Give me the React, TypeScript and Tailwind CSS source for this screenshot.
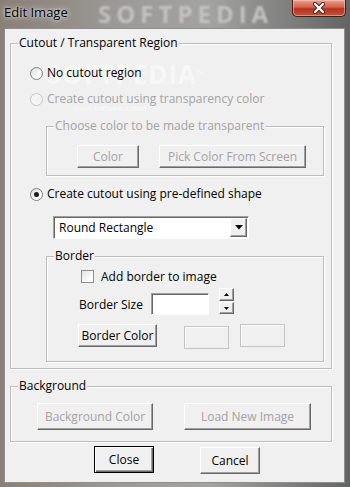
import type { ReactNode } from "react";

const raised =
  "bg-[#f0f0f0] border border-t-white border-l-white border-r-[#696969] border-b-[#696969] shadow-[inset_-1px_-1px_0_#a0a0a0]";
const sunken =
  "border border-t-[#a0a0a0] border-l-[#a0a0a0] border-r-white border-b-white shadow-[inset_1px_1px_0_#696969]";

function Group({
  label,
  disabled,
  className,
  children,
}: {
  label: string;
  disabled?: boolean;
  className: string;
  children?: ReactNode;
}) {
  return (
    <div
      className={`relative border border-[#bcbcbc] shadow-[inset_1px_1px_0_#fff,1px_1px_0_#fff] ${className}`}
    >
      <span
        className={`absolute -top-[9px] left-[7px] px-[1px] bg-[#f0f0f0] whitespace-nowrap ${
          disabled ? "text-[#a3a3a3]" : "text-black"
        }`}
      >
        {label}
      </span>
      <div className="pt-px">{children}</div>
    </div>
  );
}

function Radio({ checked, disabled }: { checked?: boolean; disabled?: boolean }) {
  return (
    <div
      className={`w-[13px] h-[13px] shrink-0 rounded-full border flex items-center justify-center ${
        disabled
          ? "border-[#c6c6c6] bg-[#f4f4f4]"
          : "border-[#7f8080] bg-[linear-gradient(135deg,#d6d6d6,#ffffff_70%)]"
      }`}
    >
      {checked && <div className="w-[5px] h-[5px] rounded-full bg-[#1b1b1b]" />}
    </div>
  );
}

function Btn({
  children,
  className,
  disabled,
  isDefault,
}: {
  children: ReactNode;
  className: string;
  disabled?: boolean;
  isDefault?: boolean;
}) {
  const frame = isDefault
    ? "bg-[#f0f0f0] border border-black shadow-[inset_1px_1px_0_#fff,inset_-1px_-1px_0_#696969,inset_-2px_-2px_0_#a0a0a0]"
    : raised;
  return (
    <div
      className={`flex items-center justify-center shrink-0 whitespace-nowrap ${frame} ${
        disabled ? "text-[#a3a3a3]" : "text-black"
      } ${className}`}
    >
      {children}
    </div>
  );
}

export default function App() {
  return (
    <div className="w-[350px] h-[487px] relative overflow-hidden bg-[linear-gradient(90deg,#8a7f76_0%,#9c9a98_35%,#a3a3a1_60%,#7a7b7a_85%,#626463_100%)] font-['Open_Sans','Liberation_Sans',Arial,sans-serif] text-[12px] leading-[16px] text-black">
      {/* title bar */}
      <div className="relative h-[28px] flex justify-between items-start">
        <div className="pointer-events-none absolute left-[98px] top-px text-[24px] leading-[26px] font-bold tracking-[5px] text-[#c2c2c0] blur-[1px]">
          SOFTPEDIA
        </div>
        <div className="relative pl-[4px] pt-[4px] text-[13px] [text-shadow:0_0_6px_#e8e8e8,0_0_3px_#e8e8e8]">
          Edit Image
        </div>
        <div className="relative mr-[4px] w-[54px] h-[17px] rounded-b-[5px] border border-t-0 border-[#4d1a12] bg-[linear-gradient(180deg,#e8a292_0%,#d2614a_45%,#b8321c_55%,#c9503a_100%)] shadow-[inset_0_0_0_1px_rgba(255,210,200,0.5)] flex items-center justify-center">
          <svg width="14" height="12" viewBox="0 0 14 12">
            <path d="M3 2 L11 10 M11 2 L3 10" stroke="#3a2a28" strokeWidth="4" strokeLinecap="round" />
            <path d="M3 2 L11 10 M11 2 L3 10" stroke="#ffffff" strokeWidth="2.2" strokeLinecap="round" />
          </svg>
        </div>
      </div>

      {/* client area */}
      <div className="relative ml-[4px] w-[341px] h-[455px] bg-[#f0f0f0] border border-[#8f8f8f]">
        <div className="pointer-events-none absolute left-[42px] top-[30px] text-[26px] leading-[30px] font-bold tracking-[1px] text-white opacity-50">
          SOFTPEDIA<span className="text-[7px] align-top">™</span>
        </div>
        <div className="pointer-events-none absolute left-[68px] top-[74px] text-[8px] leading-[10px] text-white opacity-60">
          www.softpedia.com
        </div>

        <Group label="Cutout / Transparent Region" className="ml-[5px] mt-[14px] w-[322px] h-[326px]">
          <div className="relative ml-[19px] mt-[21px] h-[14px] flex items-center">
            <Radio />
            <span className="ml-[4px]">No cutout region</span>
          </div>
          <div className="relative ml-[19px] mt-[12px] h-[14px] flex items-center text-[#a3a3a3]">
            <Radio disabled />
            <span className="ml-[4px]">Create cutout using transparency color</span>
          </div>

          <Group
            label="Choose color to be made transparent"
            disabled
            className="ml-[35px] mt-[20px] w-[278px] h-[50px]"
          >
            <div className="ml-[30px] mt-[17px] flex gap-[20px]">
              <Btn disabled className="w-[62px] h-[23px]">
                Color
              </Btn>
              <Btn disabled className="w-[147px] h-[23px]">
                Pick Color From Screen
              </Btn>
            </div>
          </Group>

          <div className="ml-[19px] mt-[11px] h-[14px] flex items-center">
            <Radio checked />
            <span className="ml-[4px]">Create cutout using pre-defined shape</span>
          </div>

          <div className={`ml-[42px] mt-[15px] w-[196px] h-[23px] bg-white flex items-center ${sunken}`}>
            <span className="ml-[5px] flex-1">Round Rectangle</span>
            <div className={`w-[17px] h-[19px] mr-px flex items-center justify-center ${raised}`}>
              <svg width="8" height="5" viewBox="0 0 8 5">
                <path d="M0 0 H8 L4 4.5 Z" fill="#000" />
              </svg>
            </div>
          </div>

          <Group label="Border" className="ml-[35px] mt-[17px] w-[278px] h-[106px]">
            <div className="ml-[34px] mt-[12px] h-[13px] flex items-center">
              <div className="w-[13px] h-[13px] border border-[#8e8f8f] bg-[linear-gradient(135deg,#e2e2e2,#ffffff_75%)] shrink-0" />
              <span className="ml-[7px]">Add border to image</span>
            </div>

            <div className="ml-[32px] mt-[5px] flex items-start">
              <span className="w-[72px] mt-[9px]">Border Size</span>
              <div className={`mt-[5px] w-[58px] h-[22px] bg-white ${sunken}`} />
              <div className="ml-[10px] flex flex-col gap-px">
                <div className={`w-[15px] h-[13px] flex items-center justify-center ${raised}`}>
                  <svg width="5" height="3" viewBox="0 0 5 3">
                    <path d="M0 3 H5 L2.5 0 Z" fill="#000" />
                  </svg>
                </div>
                <div className={`w-[15px] h-[12px] flex items-center justify-center ${raised}`}>
                  <svg width="5" height="3" viewBox="0 0 5 3">
                    <path d="M0 0 H5 L2.5 3 Z" fill="#000" />
                  </svg>
                </div>
              </div>
            </div>

            <div className="ml-[31px] mt-[9px] flex items-start">
              <Btn className="w-[79px] h-[23px]">Border Color</Btn>
              <div className="ml-[27px] mt-[2px] w-[45px] h-[23px] border border-[#c4c4c4] shadow-[inset_1px_1px_0_#fff]" />
              <div className="ml-[11px] w-[45px] h-[23px] border border-[#c4c4c4] shadow-[inset_1px_1px_0_#fff]" />
            </div>
          </Group>
        </Group>

        <Group label="Background" className="ml-[5px] mt-[17px] w-[322px] h-[56px]">
          <div className="ml-[26px] mt-[15px] flex gap-[31px]">
            <Btn disabled className="w-[116px] h-[27px]">
              Background Color
            </Btn>
            <Btn disabled className="w-[127px] h-[27px]">
              Load New Image
            </Btn>
          </div>
        </Group>

        <div className="ml-[89px] mt-[4px] flex items-start gap-[46px]">
          <Btn isDefault className="w-[60px] h-[27px]">
            Close
          </Btn>
          <Btn className="mt-px w-[60px] h-[27px]">Cancel</Btn>
        </div>
      </div>
    </div>
  );
}
